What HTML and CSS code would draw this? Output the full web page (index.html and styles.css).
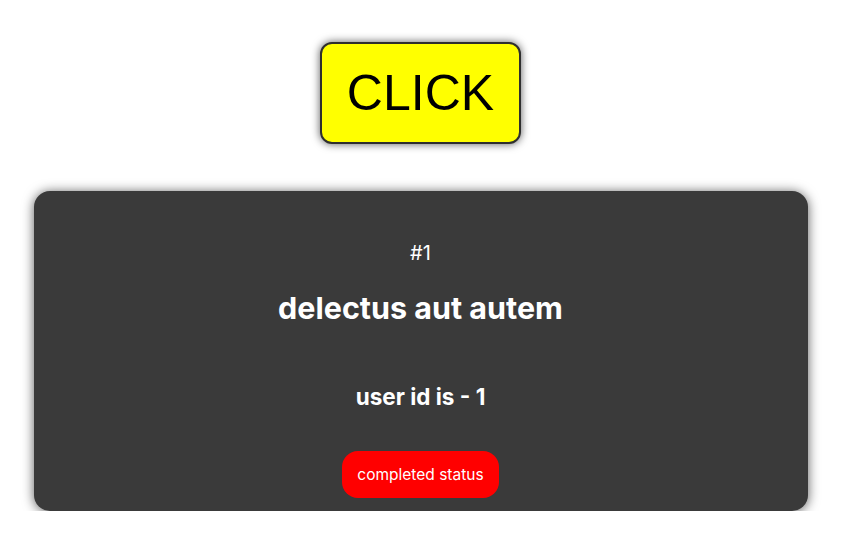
FILE: index.html
```html
<!DOCTYPE html>
<html>
<head>
<meta charset="utf-8">
<link rel="stylesheet" href="styles.css">
</head>
<body>
<div class="page">
  <button class="click-btn">CLICK</button>
  <div class="card">
    <div class="num">#1</div>
    <div class="title">delectus aut autem</div>
    <div class="user">user id is - 1</div>
    <div class="status">completed status</div>
  </div>
</div>
</body>
</html>
```

FILE: styles.css
```css
html, body {
  margin: 0;
  padding: 0;
  background: #ffffff;
}
.page {
  display: flex;
  flex-direction: column;
  align-items: center;
  padding-top: 42px;
  font-family: Inter, "Noto Sans", sans-serif;
}
.click-btn {
  box-sizing: border-box;
  width: 201px;
  height: 102px;
  background: #ffff00;
  border: 2px solid #2e2e2e;
  border-radius: 12px;
  box-shadow: 0 0 9px rgba(0,0,0,0.65);
  font-family: "Liberation Sans", Arial, sans-serif;
  font-size: 50px;
  color: #000;
  padding: 0;
  cursor: pointer;
}
.card {
  box-sizing: border-box;
  width: 774px;
  height: 320px;
  margin-top: 47px;
  background: #3a3a3a;
  border-radius: 16px;
  box-shadow: 0 1px 12px rgba(0,0,0,0.65);
  color: #fff;
  display: flex;
  flex-direction: column;
  align-items: center;
  padding-top: 50px;
}
.num {
  font-size: 20px;
  line-height: 24px;
  font-weight: 400;
}
.title {
  margin-top: 25px;
  font-size: 30.5px;
  line-height: 36px;
  font-weight: 700;
}
.user {
  margin-top: 57px;
  font-size: 22.5px;
  line-height: 28px;
  font-weight: 700;
}
.status {
  margin-top: 40px;
  box-sizing: border-box;
  height: 47px;
  line-height: 47px;
  padding: 0 15px;
  background: #ff0000;
  border-radius: 16px;
  font-size: 15.5px;
}
```
